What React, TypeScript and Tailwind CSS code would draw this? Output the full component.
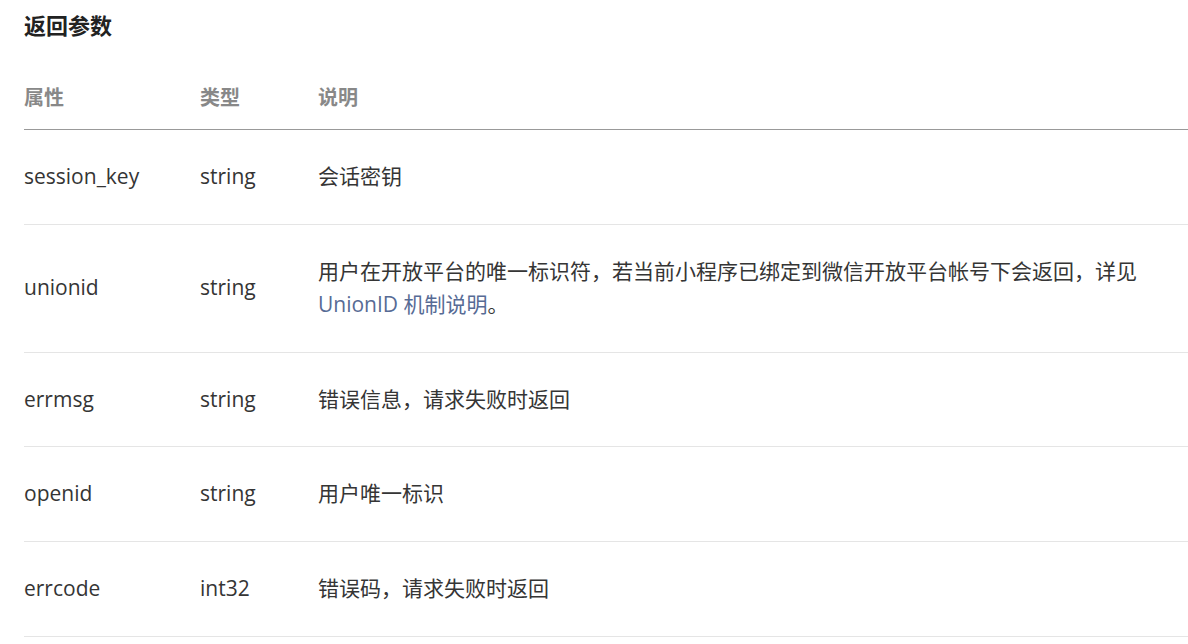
const rows: { name: string; type: string; desc: React.ReactNode }[] = [
  { name: 'session_key', type: 'string', desc: '会话密钥' },
  {
    name: 'unionid',
    type: 'string',
    desc: (
      <>
        用户在开放平台的唯一标识符，若当前小程序已绑定到微信开放平台帐号下会返回，详见
        <br />
        <a className="text-[#576b95]">UnionID 机制说明</a>。
      </>
    ),
  },
  { name: 'errmsg', type: 'string', desc: '错误信息，请求失败时返回' },
  { name: 'openid', type: 'string', desc: '用户唯一标识' },
  { name: 'errcode', type: 'int32', desc: '错误码，请求失败时返回' },
];

export default function App() {
  return (
    <div
      className="bg-white w-[1188px] h-[644px] overflow-hidden pl-6 text-[#353535]"
      style={{ fontFamily: '"Open Sans", "Noto Sans CJK SC", sans-serif' }}
    >
      <h2 className="text-[22px] font-bold leading-[32px] pt-[9px] text-[#222]">返回参数</h2>
      <div className="mt-[9px]">
        <div className="grid grid-cols-[176px_118px_1fr] border-b border-[#999] pt-[32px] pb-[15px] text-[20px] leading-[32px] font-bold text-[#888]">
          <div>属性</div>
          <div>类型</div>
          <div>说明</div>
        </div>
        {rows.map((r) => (
          <div
            key={r.name}
            className="grid grid-cols-[176px_118px_1fr] border-b border-[#e5e5e5] py-[30px] text-[21px] leading-[33.6px] items-center"
          >
            <div>{r.name}</div>
            <div>{r.type}</div>
            <div>{r.desc}</div>
          </div>
        ))}
      </div>
    </div>
  );
}
